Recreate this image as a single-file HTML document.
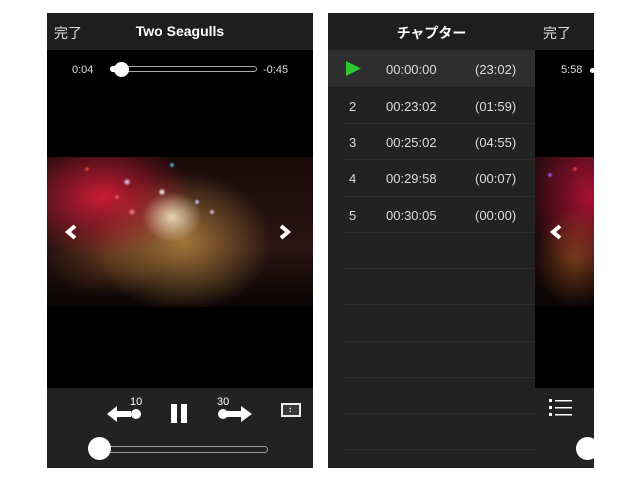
<!DOCTYPE html>
<html><head><meta charset="utf-8"><style>
*{margin:0;padding:0;box-sizing:border-box}
body{width:640px;height:480px;background:#fff;position:relative;overflow:hidden;font-family:"Liberation Sans","Noto Sans CJK JP",sans-serif;color:#fff}
.abs{position:absolute}
.photo{background:
radial-gradient(ellipse 30px 25px at 125px 60px,rgba(255,245,210,.8),transparent),
radial-gradient(circle 3px at 40px 12px,#f44,transparent),
radial-gradient(circle 4px at 80px 25px,#e8d8ff,transparent),
radial-gradient(circle 3px at 70px 40px,#f66,transparent),
radial-gradient(circle 4px at 85px 55px,#ff8080,transparent),
radial-gradient(circle 4px at 115px 35px,#fff,transparent),
radial-gradient(circle 3px at 150px 45px,#c8d8ff,transparent),
radial-gradient(circle 3px at 165px 55px,#d8c8ff,transparent),
radial-gradient(circle 3px at 125px 8px,#4cf,transparent),
radial-gradient(ellipse 90px 60px at 55px 40px,rgba(230,30,60,.85),transparent),
radial-gradient(ellipse 90px 70px at 135px 85px,rgba(230,170,80,.65),transparent),
radial-gradient(ellipse 60px 40px at 60px 100px,rgba(120,70,30,.6),transparent),
linear-gradient(180deg,#1a0a0a 0%,#2a1412 60%,#0a0505 100%)}
.row{position:absolute;left:0;width:207px;height:37px;font-size:13px;color:#ddd}
.row span{position:absolute;top:12px}
.sep{position:absolute;left:14px;width:193px;height:1px;background:#2c2c2c}
</style></head><body>
<!-- left phone -->
<div class="abs" style="left:47px;top:13px;width:266px;height:455px;background:#000">
 <div class="abs" style="left:0;top:0;width:266px;height:37px;background:#1e1e1e"></div>
 <div class="abs" style="left:7px;top:10px;font-size:14px;color:#ddd">完了</div>
 <div class="abs" style="left:0;top:10px;width:266px;text-align:center;font-size:14px;font-weight:bold">Two Seagulls</div>
 <div class="abs" style="left:25px;top:51px;font-size:11px;color:#ddd">0:04</div>
 <div class="abs" style="left:216px;top:51px;font-size:11px;color:#ddd">-0:45</div>
 <div class="abs" style="left:63px;top:53px;width:147px;height:6px;border:1px solid #aaa;border-radius:3px"></div>
 <div class="abs" style="left:63px;top:53px;width:12px;height:6px;background:#fff;border-radius:3px"></div>
 <div class="abs" style="left:67px;top:49px;width:15px;height:15px;background:#fff;border-radius:50%"></div>
 <div class="abs photo" style="left:0;top:144px;width:266px;height:150px"></div>
 <svg class="abs" style="left:17px;top:211px" width="14" height="16"><polyline points="11,2 4,8 11,14" fill="none" stroke="#fff" stroke-width="4"/></svg>
 <svg class="abs" style="left:231px;top:211px" width="14" height="16"><polyline points="3,2 10,8 3,14" fill="none" stroke="#fff" stroke-width="4"/></svg>
 <div class="abs" style="left:0;top:375px;width:266px;height:80px;background:#222">
  <svg class="abs" style="left:58px;top:4px" width="160" height="32">
   <text x="25" y="13" fill="#fff" font-size="11" font-family="Liberation Sans">10</text>
   <polygon points="2,22 12,14 12,19 26,19 26,25 12,25 12,30" fill="#fff"/>
   <circle cx="31" cy="22" r="5" fill="#fff"/>
   <rect x="66" y="12" width="6" height="19" fill="#fff"/><rect x="76" y="12" width="6" height="19" fill="#fff"/>
   <text x="112" y="13" fill="#fff" font-size="11" font-family="Liberation Sans">30</text>
   <circle cx="118" cy="22" r="5" fill="#fff"/>
   <polygon points="122,19 136,19 136,14 147,22 136,30 136,25 122,25" fill="#fff"/>
  </svg>
  <div class="abs" style="left:234px;top:15px;width:20px;height:14px;border:2px solid #eee;background:#3a3a3a"></div>
  <div class="abs" style="left:241px;top:17px;font-size:8px;font-weight:bold">&#8597;</div>
  <div class="abs" style="left:52px;top:58px;width:169px;height:7px;border:1px solid #999;border-radius:4px"></div>
  <div class="abs" style="left:41px;top:49px;width:23px;height:23px;background:#fff;border-radius:50%"></div>
 </div>
</div>
<!-- right phone -->
<div class="abs" style="left:328px;top:13px;width:266px;height:455px;background:#000;overflow:hidden">
 <div class="abs" style="left:207px;top:0;width:59px;height:37px;background:#1e1e1e"></div>
 <div class="abs" style="left:215px;top:10px;font-size:14px;color:#ddd">完了</div>
 <div class="abs" style="left:233px;top:51px;font-size:11px;color:#ddd">5:58</div>
 <div class="abs" style="left:262px;top:55px;width:5px;height:5px;background:#fff;border-radius:50%"></div>
 <div class="abs" style="left:207px;top:144px;width:59px;height:150px;background:radial-gradient(circle 3px at 40px 12px,#f44,transparent),radial-gradient(circle 3px at 15px 18px,#a6f,transparent),radial-gradient(ellipse 40px 50px at 40px 100px,rgba(160,90,30,.6),transparent),radial-gradient(ellipse 60px 80px at 55px 40px,rgba(200,20,60,.8),transparent),linear-gradient(180deg,#2a0a12,#1a0808 70%,#0a0505)"></div>
 <svg class="abs" style="left:221px;top:211px" width="14" height="16"><polyline points="11,2 4,8 11,14" fill="none" stroke="#fff" stroke-width="4"/></svg>
 <div class="abs" style="left:207px;top:375px;width:59px;height:80px;background:#222"></div>
 <svg class="abs" style="left:220px;top:385px" width="26" height="20"><g fill="#fff"><rect x="1" y="1" width="3" height="3"/><rect x="1" y="8" width="3" height="3"/><rect x="1" y="15" width="3" height="3"/><rect x="7" y="2" width="17" height="1.5"/><rect x="7" y="9" width="17" height="1.5"/><rect x="7" y="16" width="17" height="1.5"/></g></svg>
 <div class="abs" style="left:248px;top:424px;width:23px;height:23px;background:#fff;border-radius:50%"></div>
 <!-- chapter panel -->
 <div class="abs" style="left:0;top:0;width:207px;height:455px;background:#222">
  <div class="abs" style="left:0;top:0;width:207px;height:37px;background:#1e1e1e"></div>
  <div class="abs" style="left:0;top:10px;width:207px;text-align:center;font-size:14px;font-weight:bold">チャプター</div>
  <div class="row" style="top:37px;background:#2e2e2e">
   <svg class="abs" style="left:18px;top:11px" width="16" height="16"><polygon points="0,0 15,7.5 0,15" fill="#2ec82e"/></svg>
   <span style="left:58px">00:00:00</span><span style="left:147px">(23:02)</span></div>
  <div class="row" style="top:74px"><span style="left:21px">2</span><span style="left:58px">00:23:02</span><span style="left:147px">(01:59)</span></div>
  <div class="sep" style="top:110px"></div>
  <div class="row" style="top:110px"><span style="left:21px">3</span><span style="left:58px">00:25:02</span><span style="left:147px">(04:55)</span></div>
  <div class="sep" style="top:146px"></div>
  <div class="row" style="top:146px"><span style="left:21px">4</span><span style="left:58px">00:29:58</span><span style="left:147px">(00:07)</span></div>
  <div class="sep" style="top:183px"></div>
  <div class="row" style="top:183px"><span style="left:21px">5</span><span style="left:58px">00:30:05</span><span style="left:147px">(00:00)</span></div>
  <div class="sep" style="top:219px"></div>
  <div class="sep" style="top:255px"></div>
  <div class="sep" style="top:291px"></div>
  <div class="sep" style="top:328px"></div>
  <div class="sep" style="top:364px"></div>
  <div class="sep" style="top:400px"></div>
  <div class="sep" style="top:436px"></div>
 </div>
</div>
</body></html>
